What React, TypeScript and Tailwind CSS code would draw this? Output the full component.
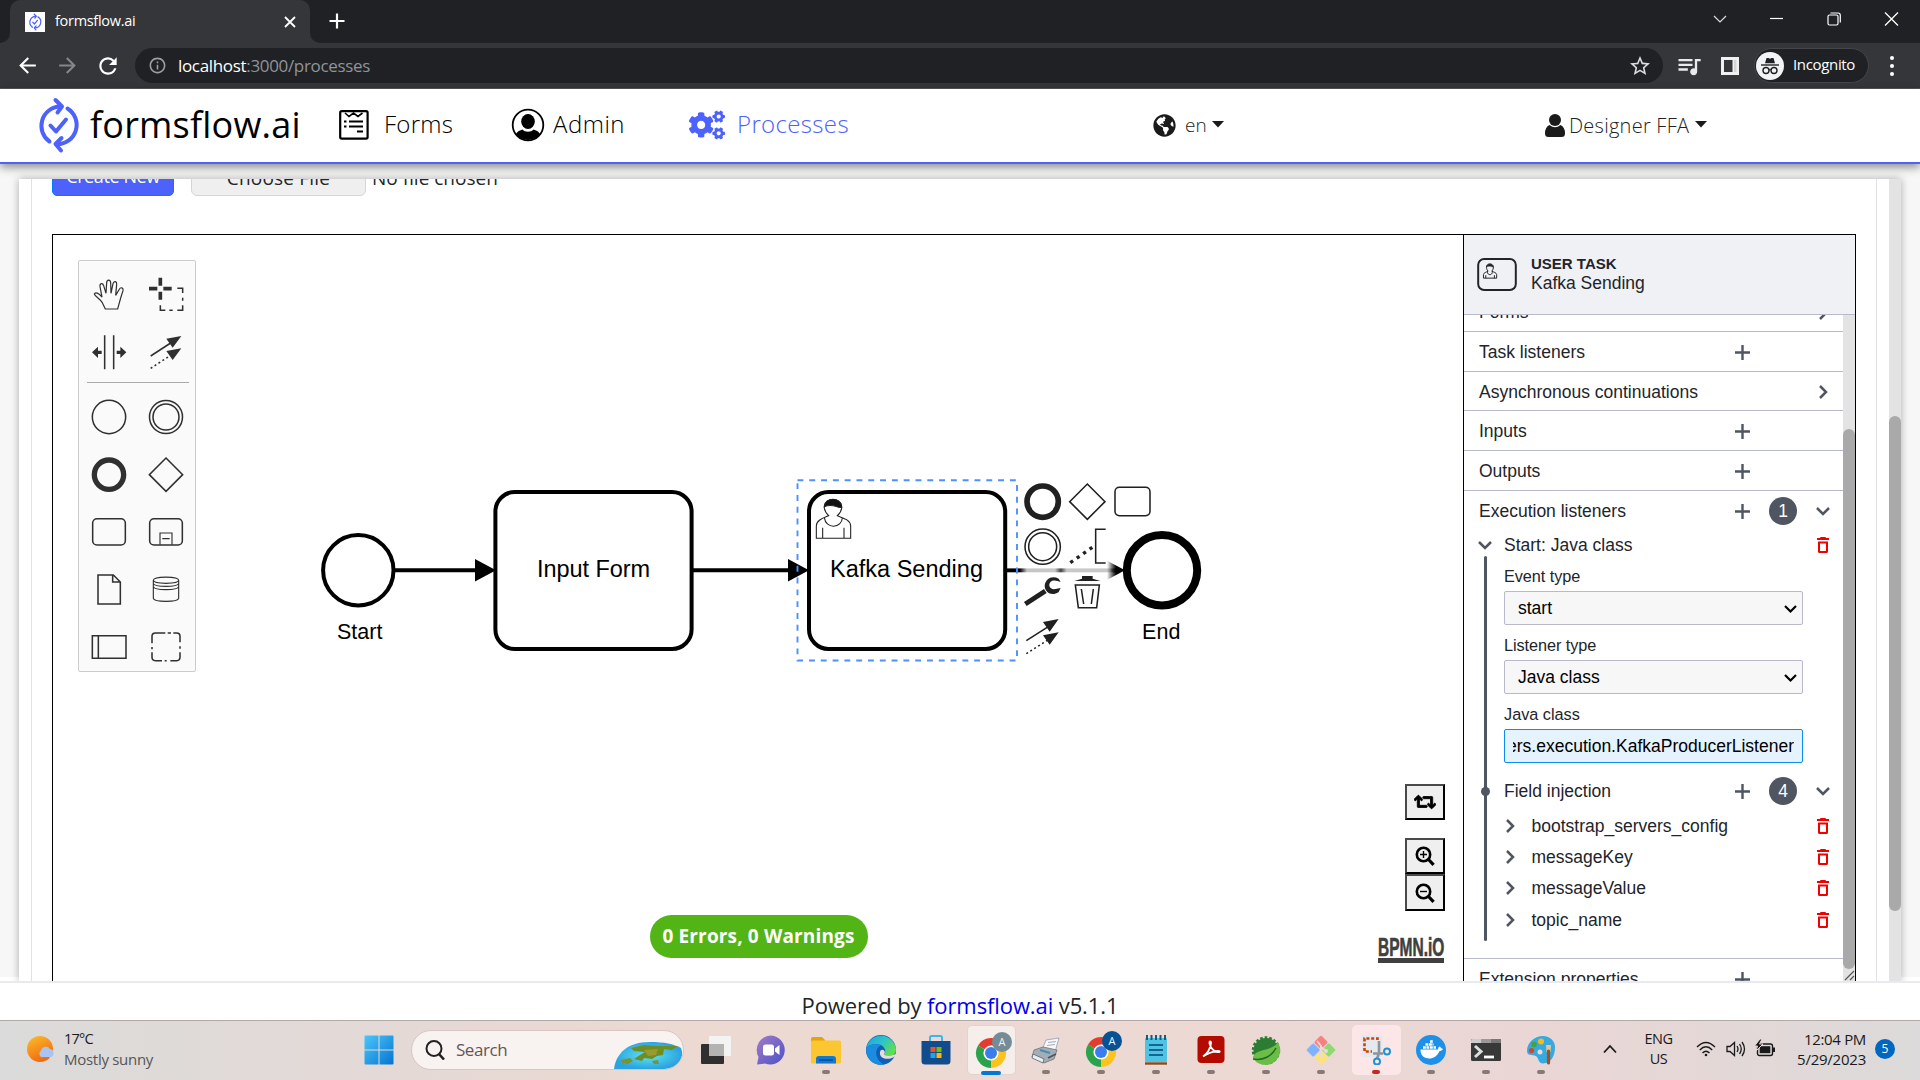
import React from "react";
import type { ReactNode } from "react";
import { FaCogs, FaGlobeAmericas, FaRetweet } from "react-icons/fa";
import { MdQueueMusic, MdStarBorder, MdInfoOutline, MdRefresh, MdArrowBack, MdArrowForward } from "react-icons/md";

const OPEN = "font-['Open_Sans','Noto_Sans',sans-serif]";
const ARIAL = "font-['Liberation_Sans',Arial,sans-serif]";

function LogoMark({ className }: { className: string }) {
  return (
    <svg viewBox="36 96 46 58" className={className} fill="none" stroke="#4d61fc" strokeWidth="4" strokeLinecap="round" strokeLinejoin="round">
      <path d="M50.5 141.5A19.3 19.3 0 0 1 61 106.5" />
      <path d="M56.5 100L63 106.5L58.5 112.5" />
      <path d="M68.5 108.5A19.3 19.3 0 0 1 58 144.2" />
      <path d="M62.5 138L56.5 144L62 150.5" />
      <path d="M51.5 125.5L57 131.5L67 119.5" />
    </svg>
  );
}

/* ---------- Browser chrome ---------- */

function TabStrip() {
  return (
    <div className="flex h-[43px] bg-[#202124] text-white">
      <div className="flex w-[10px] bg-[#35363a]">
        <div className="h-[43px] w-[10px] rounded-br-[10px] bg-[#202124]" />
      </div>
      <div className="flex w-[300px] items-center rounded-t-[10px] bg-[#35363a] pl-[15px] pr-[14px]">
        <div className="flex h-5 w-5 items-center justify-center bg-white">
          <LogoMark className="h-[18px] w-4" />
        </div>
        <span className="ml-[10px] -mt-[2px] text-[14.5px] tracking-[-0.3px]">formsflow.ai</span>
        <svg viewBox="0 0 12 12" className="ml-auto h-3 w-3" stroke="#fff" strokeWidth="1.8">
          <path d="M1 1L11 11M11 1L1 11" />
        </svg>
      </div>
      <div className="w-[10px] bg-[#35363a]">
        <div className="h-[43px] w-[10px] rounded-bl-[10px] bg-[#202124]" />
      </div>
      <svg viewBox="0 0 16 16" className="ml-[9px] mt-[13px] h-4 w-4" stroke="#fff" strokeWidth="2.2">
        <path d="M8 0.5V15.5M0.5 8H15.5" />
      </svg>
      <div className="ml-auto flex gap-[42px] pr-[21px] pt-[12px]">
        <svg viewBox="0 0 15 14" className="h-[14px] w-[15px]" fill="none" stroke="#ddd" strokeWidth="1.2">
          <path d="M1 4L7 10L13 4" />
        </svg>
        <svg viewBox="0 0 15 14" className="h-[14px] w-[15px]" stroke="#fff" strokeWidth="1.2">
          <path d="M0 6.5H13" />
        </svg>
        <svg viewBox="0 0 15 14" className="h-[14px] w-[15px]" fill="none" stroke="#fff" strokeWidth="1.2">
          <rect x="1" y="3" width="10" height="10" rx="1.5" />
          <path d="M3.5 1H11a2.3 2.3 0 0 1 2.3 2.3V10.5" />
        </svg>
        <svg viewBox="0 0 15 14" className="h-[14px] w-[15px]" stroke="#fff" strokeWidth="1.3">
          <path d="M1 0.5L14 13.5M14 0.5L1 13.5" />
        </svg>
      </div>
    </div>
  );
}

function AddressBar() {
  return (
    <div className="flex h-[46px] items-center border-b border-[#55565a] bg-[#35363a] pl-[15px] text-white">
      <MdArrowBack className="h-[25px] w-[25px]" />
      <MdArrowForward className="ml-[15px] h-[25px] w-[25px] text-[#85868a]" />
      <MdRefresh className="ml-[15px] h-[26px] w-[26px]" />
      <div className="ml-[14px] flex h-[35px] w-[1528px] items-center rounded-full bg-[#202124] pl-[13px] pr-[11px]">
        <MdInfoOutline className="h-[19px] w-[19px] text-[#9aa0a6]" />
        <span className="ml-[11px] text-[17px] tracking-[-0.33px]">
          localhost<span className="text-[#8f949a]">:3000/processes</span>
        </span>
        <MdStarBorder className="ml-auto h-[24px] w-[24px] text-[#dadce0]" />
      </div>
      <MdQueueMusic className="ml-[12px] h-[28px] w-[28px] text-[#e8eaed]" />
      <svg viewBox="0 0 18 18" className="ml-[18px] h-[18px] w-[18px]">
        <path fill="#f1f1f1" fillRule="evenodd" d="M0 0H18V18H0ZM3 3V15H11.5V3Z" />
        <rect x="13" y="3" width="2.4" height="12" fill="#d5d5d5" />
      </svg>
      <div className="ml-[15px] flex h-[35px] w-[115px] items-center rounded-full border border-[#45464a] bg-[#202124]">
        <svg viewBox="0 0 28 28" className="ml-px h-[28px] w-[28px]">
          <circle cx="14" cy="14" r="14" fill="#f1f3f4" />
          <path d="M10.5 6H12.5L14 6.8L15.5 6H17.5L19 11.3H9Z" fill="#202124" />
          <path d="M5 13H23" stroke="#202124" strokeWidth="1.4" />
          <g fill="none" stroke="#202124" strokeWidth="1.4">
            <circle cx="10" cy="18.5" r="3" />
            <circle cx="18" cy="18.5" r="3" />
            <path d="M13 18Q14 17.3 15 18" />
          </g>
        </svg>
        <span className="ml-[9px] -mt-[2px] text-[15px] tracking-[-0.34px]">Incognito</span>
      </div>
      <div className="ml-[21px] flex flex-col gap-[4px]">
        <i className="h-[4px] w-[4px] rounded-full bg-white" />
        <i className="h-[4px] w-[4px] rounded-full bg-white" />
        <i className="h-[4px] w-[4px] rounded-full bg-white" />
      </div>
    </div>
  );
}

/* ---------- Application header ---------- */

function Caret({ className }: { className: string }) {
  return (
    <svg viewBox="0 0 12 7" className={className}>
      <path d="M0 0H12L6 6.5Z" fill="#1a1a1a" />
    </svg>
  );
}

function AppHeader() {
  return (
    <header className="relative z-10 flex h-[75px] items-center border-b-2 border-[#4d61fc] bg-white pl-[35px] text-black shadow-[0_3px_9px_rgba(0,0,0,0.45)]">
      <LogoMark className="-mt-[2px] h-[58px] w-[46px]" />
      <span className="-mt-[2px] ml-[9px] w-[215px] whitespace-nowrap text-[36px] leading-[40px] tracking-[0.2px]">formsflow.ai</span>
      <svg viewBox="0 0 30 30" className="-mt-[2px] ml-[34px] h-[30px] w-[30px]" fill="none" stroke="#000">
        <rect x="1.2" y="1.2" width="27.4" height="27.4" rx="1.5" strokeWidth="2.2" />
        <path d="M6 3L10 6.5L14.5 3L19 6.5L23.5 3" strokeWidth="1.6" />
        <path d="M5 11.5H7.5M10 11.5H24M5 16.5H7.5M10 16.5H24M18 21.5H24" strokeWidth="2.1" />
      </svg>
      <span className="-mt-[3px] ml-[15px] w-[74px] text-[24px] font-light tracking-[0.3px]">Forms</span>
      <svg viewBox="0 0 34 34" className="-mt-px ml-[53px] h-[34px] w-[34px]">
        <clipPath id="adm"><circle cx="17" cy="17" r="15" /></clipPath>
        <circle cx="17" cy="17" r="15.3" fill="#fff" stroke="#000" strokeWidth="1.8" />
        <g clipPath="url(#adm)">
          <ellipse cx="17" cy="13.5" rx="6.8" ry="7.6" />
          <path d="M4 34V29C5 24 8 22.5 11.5 21.5C14 24.5 20 24.5 22.5 21.5C26 22.5 29 24 30 29V34Z" />
        </g>
      </svg>
      <span className="-mt-[3px] ml-[8px] w-[81px] text-[24px] font-light tracking-[0.5px]">Admin</span>
      <FaCogs className="-mt-[2px] ml-[55px] h-[36px] w-[36px] text-[#4d61fc]" />
      <span className="-mt-[3px] ml-[12px] w-[116px] text-[24px] font-light tracking-[0.35px] text-[#4d61fc]">Processes</span>
      <FaGlobeAmericas className="ml-[300px] h-[23px] w-[23px] text-[#1a1a1a]" />
      <span className="ml-[9px] w-[24px] text-[19px] font-light text-[#222]">en</span>
      <Caret className="-mt-[2px] ml-[3px] h-[7px] w-[12px]" />
      <svg viewBox="0 0 20 23" className="ml-[321px] h-[23px] w-[20px]">
        <ellipse cx="10" cy="6" rx="6" ry="6" fill="#1a1a1a" />
        <path d="M4.5 11Q10 15.5 15.5 11Q20 13 20 19.5Q20 23 16.5 23H3.5Q0 23 0 19.5Q0 13 4.5 11Z" fill="#1a1a1a" />
      </svg>
      <span className="ml-[4px] w-[122px] whitespace-nowrap text-[20px] font-light tracking-[0.25px] text-[#222]">Designer FFA</span>
      <Caret className="-mt-[2px] ml-[4px] h-[7px] w-[12px]" />
    </header>
  );
}

/* ---------- Modeler palette ---------- */

function Ico({ x, y, children }: { x: number; y: number; children: ReactNode }) {
  return (
    <div className="flex h-[57.6px] items-center justify-center">
      <svg viewBox={`${x - 72} ${y - 72} 144 144`} className="h-12 w-12" fill="none" stroke="#303030" strokeWidth="4.6">
        {children}
      </svg>
    </div>
  );
}

function Palette() {
  return (
    <div className="absolute left-[25px] top-[25px] h-[412px] w-[118px] rounded-[2px] border border-[#ccc] bg-[#fafafa]">
      <div className="mt-[5px] grid grid-cols-2 pl-px">
        <Ico x={205} y={225}>
          <path strokeWidth="3.6" d="M194 267L185 248C178 236 164 230 161 222C164 215 174 219 184 231L178 200C177 189 186 188 189 197L196 220L198 188C199 178 209 178 210 188L211 220L217 191C220 181 229 184 228 193L225 226L236 208C240 200 249 203 247 212L240 234L231 267Z" />
        </Ico>
        <Ico x={378} y={226}>
          <path strokeWidth="11" d="M361 174V198M361 216V240M327 207H352M370 207H395" />
          <path d="M412 206H428V220M428 234V243M428 257V272H412M398 272H388M376 272H361V257" />
        </Ico>
        <Ico x={205} y={397}>
          <path d="M192 347V449M219 347V449" />
          <path fill="#303030" stroke="none" d="M154 398L172 381V393H183V403H172V415ZM257 398L239 381V393H228V403H239V415Z" />
        </Ico>
        <Ico x={378} y={397}>
          <path d="M332 409L392 370" />
          <path d="M332 446L395 405" strokeDasharray="6 8" />
          <path fill="#303030" stroke="none" d="M424 349L379 357L398 384ZM424 386L379 394L398 421Z" />
        </Ico>
      </div>
      <div className="ml-[8px] mr-[6px] mb-[5px] mt-px h-px bg-[#aaa]" />
      <div className="grid grid-cols-2 pl-px">
        <Ico x={205} y={593}><circle cx="205" cy="593" r="50" /></Ico>
        <Ico x={378} y={593}>
          <circle cx="378" cy="593" r="49.500" />
          <circle cx="378" cy="593" r="39" />
        </Ico>
        <Ico x={205} y={765}><circle cx="205" cy="764" r="44" strokeWidth="16" /></Ico>
        <Ico x={378} y={765}><path d="M378 714L428 764L378 814L328 764Z" /></Ico>
        <Ico x={205} y={938}><rect x="156" y="898" width="98" height="79" rx="13" /></Ico>
        <Ico x={378} y={938}>
          <rect x="329" y="898" width="98" height="79" rx="13" />
          <path strokeWidth="3.4" d="M360 976V941H396V976M367 958H389" />
        </Ico>
        <Ico x={205} y={1111}><path d="M172 1066H218L239 1087V1153H172ZM216 1066V1087H239" /></Ico>
        <Ico x={378} y={1111}>
          <path strokeWidth="3.4" d="M340 1082C340 1069 416 1069 416 1082C416 1094 340 1094 340 1082V1136C342 1148 414 1148 416 1136V1082M340 1092C344 1103 412 1103 416 1092M340 1101C344 1113 412 1113 416 1101" />
        </Ico>
        <Ico x={205} y={1284}><path d="M155 1250H256V1318H155ZM173 1250V1318" /></Ico>
        <Ico x={378} y={1284}>
          <path d="M336 1273V1252Q336 1242 346 1242H376M383 1242H393M400 1242H410Q420 1242 420 1252V1270M420 1282V1289M420 1300V1315Q420 1325 410 1325H391M380 1325H374M366 1325H346Q336 1325 336 1315V1300M336 1284V1291" />
        </Ico>
      </div>
    </div>
  );
}

/* ---------- Diagram ---------- */

function Diagram() {
  return (
    <svg viewBox="53 235 1410 746" className="absolute left-0 top-0 h-[746px] w-[1410px]" fill="none" stroke="#000" strokeWidth="4">
      <defs>
        <linearGradient id="fade" gradientUnits="userSpaceOnUse" x1="1007" y1="0" x2="1124" y2="0">
          <stop offset="0.11" stopColor="#000" />
          <stop offset="0.17" stopColor="#c4c4c4" />
          <stop offset="0.41" stopColor="#c8c8c8" />
          <stop offset="0.46" stopColor="#444" />
          <stop offset="0.51" stopColor="#c8c8c8" />
          <stop offset="0.88" stopColor="#c8c8c8" />
          <stop offset="0.94" stopColor="#000" />
        </linearGradient>
        <linearGradient id="fadeHead" gradientUnits="userSpaceOnUse" x1="1107" y1="0" x2="1116" y2="0">
          <stop offset="0" stopColor="#000" stopOpacity="0" />
          <stop offset="1" stopColor="#000" />
        </linearGradient>
      </defs>
      <circle cx="358.3" cy="570.3" r="35.2" />
      <path d="M395 570.3H476M693 570.3H790" />
      <path fill="#000" stroke="none" d="M475 559L496 570.3L475 581.6ZM788 559L809 570.3L788 581.6Z" />
      <rect x="495.4" y="492" width="196.2" height="157" rx="19.5" />
      <rect x="809" y="492" width="196.2" height="157" rx="19.5" />
      <rect x="1007" y="568.4" width="110" height="3.9" fill="url(#fade)" stroke="none" />
      <path fill="url(#fadeHead)" stroke="none" d="M1104 559L1125 570.3L1104 581.6Z" />
      <circle cx="1162" cy="570.3" r="35.2" strokeWidth="8" />
      <rect x="797.5" y="480.3" width="219.5" height="180.2" stroke="#4d90ff" strokeWidth="1.9" strokeDasharray="5.9 5.9" />

      <g className={ARIAL} fill="#000" stroke="none">
        <text x="537" y="577" fontSize="23.5" textLength="113">Input Form</text>
        <text x="830" y="577" fontSize="23.5" textLength="153">Kafka Sending</text>
        <text x="337" y="639" fontSize="21.5" textLength="45.5">Start</text>
        <text x="1142" y="639" fontSize="21.5" textLength="38.5">End</text>
      </g>

      <g transform="translate(780 460) scale(0.33333)" stroke="#202020" strokeWidth="4.6">
        <g strokeWidth="3.2">
          <path d="M109 235V197C110 180 130 174 146 167C135 156 132 145 133 138C134 112 184 112 185 138C186 148 182 158 172 167C190 174 211 180 212 197V235ZM128 235V203M192 235V203M133 173C137 208 186 206 187 173" />
          <path fill="#111" d="M133 140C134 110 184 110 185 142C172 146 160 128 133 140Z" />
        </g>
        <circle cx="788" cy="125" r="47" strokeWidth="17" />
        <path d="M922 72L975 125L922 178L869 125Z" />
        <rect x="1005" y="82" width="105" height="85" rx="13" />
        <circle cx="788" cy="260" r="53" />
        <circle cx="788" cy="260" r="42" />
        <path d="M977 208H947V309H977" />
        <path d="M871 308L944 257" strokeWidth="10" strokeDasharray="10 13.5" />
        <path d="M736 432L796 393" strokeWidth="15" />
        <path stroke="none" fill="#202020" d="M836 356C818 346 796 354 794 378C795 398 816 410 836 396L842 384L822 388C808 386 804 374 812 365C820 358 832 362 842 366Z" />
        <path stroke="none" fill="#202020" d="M883 363L906 356V348H938V356L961 363Z" />
        <path d="M886 375H958L950 443H895ZM904 387L911 432M940 387L934 432" />
        <path d="M739 542L805 500" />
        <path d="M739 581L805 539" strokeDasharray="6 8" />
        <path fill="#202020" stroke="none" d="M836 477L789 486L809 515ZM836 517L789 526L809 554Z" />
      </g>
    </svg>
  );
}

function CanvasButton({ className, children }: { className: string; children: ReactNode }) {
  return (
    <div className={`flex w-[40px] items-center justify-center border-2 border-b-black border-l-[#4a4a4a] border-r-black border-t-[#4a4a4a] bg-[#efefef] text-black ${className}`}>
      {children}
    </div>
  );
}

function Magnifier({ plus }: { plus?: boolean }) {
  return (
    <svg viewBox="0 0 20 20" className="h-5 w-5" fill="none" stroke="#000">
      <circle cx="8.5" cy="8.5" r="6.7" strokeWidth="2.6" />
      <path d="M13.5 13.5L18.6 18.8" strokeWidth="3.2" />
      <path d={plus ? "M5 8.5H12M8.5 5V12" : "M5 8.5H12"} strokeWidth="1.4" />
    </svg>
  );
}

function ZoomControls() {
  return (
    <div className="absolute left-[1352px] top-[549px] flex flex-col">
      <CanvasButton className="h-[36px]"><FaRetweet className="h-[22px] w-[22px]" stroke="#000" strokeWidth="24" /></CanvasButton>
      <CanvasButton className="mt-[18px] h-[36px]"><Magnifier plus /></CanvasButton>
      <CanvasButton className="h-[37px]"><Magnifier /></CanvasButton>
    </div>
  );
}

/* ---------- Properties panel ---------- */

function Cell({ children }: { children?: ReactNode }) {
  return <div className="flex w-[40px] items-center justify-center">{children}</div>;
}

function Plus() {
  return (
    <svg viewBox="0 0 15 15" className="-ml-px h-[15px] w-[15px]" stroke="#505562" strokeWidth="2.4">
      <path d="M7.5 0V15M0 7.5H15" />
    </svg>
  );
}

function Chevron({ down }: { down?: boolean }) {
  return (
    <svg viewBox="0 0 14 14" className="h-[14px] w-[14px]" fill="none" stroke="#505562" strokeWidth="2.5">
      <path d={down ? "M1 4L7 10L13 4" : "M4 1L10 7L4 13"} />
    </svg>
  );
}

function Trash() {
  return (
    <svg viewBox="0 0 12 16" className="h-4 w-3">
      <path fill="#f10000" fillRule="evenodd" d="M3.5 0H8.5L9 1H12V3H0V1H3ZM1 4.500H11V14.500Q11 16 9.500 16H2.500Q1 16 1 14.500ZM3 6.500V14H9V6.500Z" />
    </svg>
  );
}

function Badge({ children }: { children: ReactNode }) {
  return <span className="flex h-7 w-7 items-center justify-center rounded-full bg-[#505562] text-[17.5px] text-white">{children}</span>;
}

function GroupRow({ label, height, plus, arrow }: { label: string; height: string; plus?: boolean; arrow?: boolean }) {
  return (
    <div className={`flex shrink-0 border-b border-[#b9bac9] pl-[15px] pt-[2px] ${height}`}>
      <span className="flex flex-1 items-center">{label}</span>
      <Cell>{plus && <Plus />}</Cell>
      <Cell />
      <Cell>{arrow && <Chevron />}</Cell>
    </div>
  );
}

function Select({ label, value }: { label: string; value: string }) {
  return (
    <div className="w-[299px] pt-[10px]">
      <div className="h-5 text-[16.25px] leading-5 tracking-[-0.06px]">{label}</div>
      <div className="mt-[5px] flex h-[34px] items-center justify-between rounded-[2px] border border-[#b9bac9] bg-[#f7f7f8] pl-[13px] pr-[5px] text-black">
        {value}
        <svg viewBox="0 0 13 13" className="h-[13px] w-[13px]" fill="none" stroke="#000" strokeWidth="2.2">
          <path d="M1 4L6.5 9.5L12 4" />
        </svg>
      </div>
    </div>
  );
}

const FIELDS = ["bootstrap_servers_config", "messageKey", "messageValue", "topic_name"];

function PropertiesPanel() {
  return (
    <aside className={`flex w-[392px] shrink-0 flex-col border-l border-black bg-white text-[17.5px] text-[#22242a] ${ARIAL}`}>
      <div className="flex h-[80px] shrink-0 items-center border-b border-[#b9bac9] bg-[#eff1f4] pl-[13px]">
        <svg viewBox="0 0 120 100" className="h-[33px] w-[40px]" fill="none" stroke="#22242a">
          <rect x="3" y="3" width="114" height="94" rx="18" strokeWidth="6" />
          <path strokeWidth="3" d="M19 61V50C20 44 28 43 33 40C28 34 28 30 28 27C29 15 48 15 49 27C49 32 48 36 44 40C50 43 58 44 59 50V61ZM26 61V52M52 61V52M31 43C32 53 45 53 46 43" />
          <path fill="#22242a" d="M28 27C29 15 48 15 49 27C43 28 39 22 28 27Z" />
        </svg>
        <div className="-mt-px ml-[14px]">
          <div className="text-[15px] font-bold leading-[18px]">USER TASK</div>
          <div className="leading-[20px]">Kafka Sending</div>
        </div>
      </div>
      <div className="flex min-h-0 flex-1">
        <div className="flex w-[379px] flex-col overflow-hidden">
          <GroupRow label="Forms" height="h-[40px] -mt-[23px]" arrow />
          <GroupRow label="Task listeners" height="h-[40px]" plus />
          <GroupRow label="Asynchronous continuations" height="h-[39px]" arrow />
          <GroupRow label="Inputs" height="h-[40px]" plus />
          <GroupRow label="Outputs" height="h-[40px]" plus />

          <div className="flex h-[40px] shrink-0 pl-[15px]">
            <span className="flex flex-1 items-center">Execution listeners</span>
            <Cell><Plus /></Cell>
            <Cell><Badge>1</Badge></Cell>
            <Cell><Chevron down /></Cell>
          </div>
          <div className="flex h-[25px] shrink-0 items-center pl-[14px] pt-[3px]">
            <Chevron down />
            <span className="ml-[12px] flex-1">Start: Java class</span>
            <Cell><Trash /></Cell>
          </div>
          <div className="flex h-[385px] shrink-0 pl-[20px]">
            <div className="relative w-[3px] rounded-full bg-[#505562]">
              <i className="absolute -left-[3px] top-[231px] h-[9px] w-[9px] rounded-full bg-[#505562]" />
            </div>
            <div className="ml-[17px] flex-1">
              <Select label="Event type" value="start" />
              <Select label="Listener type" value="Java class" />
              <div className="w-[299px] pt-[10px]">
                <div className="h-5 text-[16.25px] leading-5">Java class</div>
                <div className="mt-[5px] flex h-[34px] items-center rounded-[2px] border border-[#0a8cf0] bg-[#e5f3ff] px-[8px] pt-px text-black">
                  <div className="flex flex-1 justify-end overflow-hidden whitespace-nowrap">ers.execution.KafkaProducerListener</div>
                </div>
              </div>
              <div className="mt-[14px] flex h-[28px]">
                <span className="flex flex-1 items-center">Field injection</span>
                <Cell><Plus /></Cell>
                <Cell><Badge>4</Badge></Cell>
                <Cell><Chevron down /></Cell>
              </div>
              <div className="mt-[5px]">
                {FIELDS.map((f) => (
                  <div key={f} className="-ml-px flex h-[31.4px] items-center">
                    <Chevron />
                    <span className="ml-[14.500px] flex-1">{f}</span>
                    <Cell><Trash /></Cell>
                  </div>
                ))}
              </div>
            </div>
          </div>
          <div className="mt-[17px] flex h-[42px] shrink-0 border-t border-[#b9bac9] pl-[15px]">
            <span className="flex flex-1 items-center">Extension properties</span>
            <Cell><Plus /></Cell>
            <Cell />
            <Cell />
          </div>
        </div>
        <div className="flex w-[12px] flex-col bg-[#e3e3e3]">
          <div className="mt-[114px] h-[540px] rounded-full bg-[#a9a9a9]" />
          <svg viewBox="0 0 12 12" className="h-3 w-3" stroke="#555" strokeWidth="1.2">
            <path d="M2 11L11 2M7 11L11 7" />
          </svg>
        </div>
      </div>
    </aside>
  );
}

/* ---------- Page body ---------- */

function Workspace() {
  return (
    <main className="flex h-[817px] bg-[linear-gradient(#f7f7f7_813px,#fff_813px)] pl-[19px] pt-[15px]">
      <div className="flex h-[802px] w-[1882px] overflow-hidden bg-white shadow-[0_0_8px_rgba(0,0,0,0.3)]">
        <div className="ml-[12px] w-[1846px] border-x border-[#dee2e6] pl-[20px]">
          <div className="-mt-[29px] flex h-[46px] text-[#212529]">
            <div className="flex w-[122px] items-end justify-center rounded-[5px] border border-[#007bff] bg-[#4d61fc] pb-[5px] text-[18px] tracking-[-0.4px] text-white">
              Create New
            </div>
            <div className="ml-[17px] flex w-[175px] items-end justify-center rounded-[6px] border border-[#d5d5d5] bg-[#efefef] pb-[3px] text-[19px] tracking-[0.2px]">
              Choose File
            </div>
            <div className="ml-[6px] flex items-end pb-[4px] text-[19px]">No file chosen</div>
          </div>
          <div className="mt-[38px] flex h-[760px] w-[1804px] border border-black">
            <div className="relative h-full w-[1410px] shrink-0">
              <Diagram />
              <Palette />
              <ZoomControls />
              <div className="absolute left-[1325px] top-[699px] w-[66px] border-b-[5px] border-[#404040] pb-px">
                <div className={`h-[23px] w-[66px] origin-left scale-x-[0.585] whitespace-nowrap text-[26.5px] font-bold leading-[26px] text-[#404040] [-webkit-text-stroke:0.6px_#404040] ${ARIAL}`}>BPMN.iO</div>
              </div>
              <div className="absolute left-[596.500px] top-[680px] flex h-[43px] w-[218px] items-center justify-center rounded-full bg-[#52b415] text-[19px] font-bold tracking-[0.15px] text-white">
                0 Errors, 0 Warnings
              </div>
            </div>
            <div className="flex h-[746px]">
              <PropertiesPanel />
            </div>
          </div>
        </div>
        <div className="ml-[12px] w-[12px] bg-[#e3e3e3] pt-[237px]">
          <div className="h-[495px] rounded-full bg-[#a9a9a9]" />
        </div>
      </div>
    </main>
  );
}

/* ---------- Taskbar ---------- */

function Chrome({ badge }: { badge: string }) {
  return (
    <svg viewBox="0 0 36 36" className="ml-[3px] h-9 w-9 overflow-visible">
      <g transform="translate(16 20)">
        <path d="M0 0L-13 -7.5A15 15 0 0 1 13 -7.5Z" fill="#e33b2e" />
        <path d="M0 0L-13 -7.5A15 15 0 0 0 0 15Z" fill="#2ba24c" />
        <path d="M0 0L0 15A15 15 0 0 0 13 -7.5H0Z" fill="#fcc31e" />
        <circle r="7.6" fill="#fff" />
        <circle r="6" fill="#3b7ded" />
      </g>
      <circle cx="27" cy="9" r="10" fill={badge} />
      <text x="27" y="13" fontSize="11" textAnchor="middle" fill="#eef3f6">A</text>
    </svg>
  );
}

type App = { icon: ReactNode; mark?: "run" | "active" | "alert" };

const S = "h-[30px] w-[30px]";

const APPS: App[] = [
  { icon: <svg viewBox="0 0 30 30" className={S}><rect x="0" y="9" width="23" height="20" rx="1" fill="#2f2f2f" /><rect x="8" y="1" width="22" height="20" rx="1" fill="#f3f3f3" /><rect x="8" y="9" width="15" height="12" fill="#b5b3b2" /></svg> },
  { icon: <svg viewBox="0 0 30 30" className={S}><defs><linearGradient id="tm" x2="1" y2="1"><stop stopColor="#a37bc9" /><stop offset="1" stopColor="#4a52c8" /></linearGradient></defs><path d="M15 0.5A14.5 14.5 0 1 1 9 28.5L1 29.5L2.5 22A14.5 14.5 0 0 1 15 0.5Z" fill="url(#tm)" /><rect x="7" y="9.5" width="11" height="11" rx="2.5" fill="#fff" /><path d="M19 13.5L23.5 10V20L19 16.5Z" fill="#fff" /></svg> },
  { mark: "run", icon: <svg viewBox="0 0 30 30" className={S}><path d="M0 4Q0 2 2 2H11L14 5V10H0Z" fill="#e2a30c" /><rect x="0" y="5.5" width="30" height="23" rx="1.5" fill="#fbc62f" /><path d="M5 28.5V24Q5 21 8 21H22Q25 21 25 24V28.5Z" fill="#1379cf" /><path d="M8 25H22" stroke="#0a4f94" strokeWidth="1.6" /></svg> },
  { icon: <svg viewBox="0 0 30 30" className={S}><defs><linearGradient id="eg" x2="1" y2="0.6"><stop stopColor="#1aa5e0" /><stop offset="0.55" stopColor="#30c4c8" /><stop offset="1" stopColor="#5fe04a" /></linearGradient></defs><circle cx="15" cy="15" r="15" fill="#0f5fb8" /><path d="M0.3 13A15 15 0 0 1 30 14.5C30 19 26.5 21 23 21C19 21 17.5 19.5 19 17.5C20 15 18 10.5 13 9.5C7 8.5 2 10 0.3 13Z" fill="url(#eg)" /><path d="M0.3 13C4 8.5 11 8.5 14.5 10.5C10.5 12.5 9 17 11 22C12.5 26 16 29 19 29.4A15 15 0 0 1 0.3 13Z" fill="#1a8de0" /><path d="M14 17C13 23 20 26 28.5 22L30 19L23.5 20.9C19 21.2 17.5 19.5 18.8 17.8C19 14 14.5 14 14 17Z" fill="#ecd9d4" /></svg> },
  { icon: <svg viewBox="0 0 30 30" className={S}><path d="M9 8V2.5Q9 1 10.5 1H19.5Q21 1 21 2.5V8" fill="none" stroke="#39b7ee" strokeWidth="2" /><path d="M0.5 6H29.5V26Q29.5 29.5 26 29.5H4Q0.5 29.5 0.5 26Z" fill="#134c8c" /><rect x="9.5" y="12" width="5" height="5" fill="#f25022" /><rect x="15.5" y="12" width="5" height="5" fill="#7fba00" /><rect x="9.5" y="18" width="5" height="5" fill="#19a5ef" /><rect x="15.5" y="18" width="5" height="5" fill="#ffb900" /></svg> },
  { mark: "active", icon: <Chrome badge="#748c98" /> },
  { mark: "run", icon: <svg viewBox="0 0 30 30" className={S}><path d="M15 5L28 3L24 17L11 15Z" fill="#f5f7f8" stroke="#99a" strokeWidth="0.8" /><path d="M3 15L12 12L26 15L23 24L13 28L1 22Z" fill="#a4adb3" stroke="#6a7378" strokeWidth="0.8" /><path d="M9 15L19 18" stroke="#4a8ab8" strokeWidth="2" /><path d="M2 19L13 24L12 28L1 23Z" fill="#e9edef" stroke="#59636a" strokeWidth="0.8" /><path d="M17 23L25 19" stroke="#4a545b" strokeWidth="1.6" /><path d="M17 7.5L25 6.5M16 10.5L24 9.5" stroke="#aab" /></svg> },
  { mark: "run", icon: <Chrome badge="#075294" /> },
  { mark: "run", icon: <svg viewBox="0 0 30 30" className={S}><rect x="4" y="3" width="22" height="24" rx="1" fill="#4ec3e3" /><path d="M6 0V5M10.5 0V5M15 0V5M19.5 0V5M24 0V5" stroke="#155a83" strokeWidth="2" /><path d="M8 10H22M8 15H22M8 20H22" stroke="#14658f" strokeWidth="1.8" /><path d="M4 28.5H26" stroke="#8a4b1c" strokeWidth="2.4" /></svg> },
  { mark: "run", icon: <svg viewBox="0 0 30 30" className={S}><rect x="1.5" y="1" width="27" height="27" rx="4" fill="#b30b00" /><path d="M7 21.5C11 19 15 13 15 8C15 5.5 13 6 13.5 8.5C14.5 14 20 18 23.5 17C25 15.5 18 14.5 7 21.5Z" fill="none" stroke="#fff" strokeWidth="1.8" /></svg> },
  { mark: "run", icon: <svg viewBox="0 0 30 30" className={S}><circle cx="15" cy="15.5" r="12.5" fill="#2c7d33" stroke="#2c7d33" strokeWidth="3.5" strokeDasharray="2.6 1.8" /><path d="M27 7C32 16 28 29 15 30C9 30 4 27 2 23C3 13 21 17 27 7Z" fill="#6cbd45" /><path d="M2 24C12 26 21 21 25 13" fill="none" stroke="#1f6a2b" strokeWidth="1.5" /></svg> },
  { mark: "run", icon: <svg viewBox="0 0 30 30" className={S}><g transform="rotate(45 15 15)"><rect x="4.5" y="4.5" width="10" height="10" rx="1.5" fill="#f98080" /><rect x="15.5" y="4.5" width="10" height="10" rx="1.5" fill="#8bdb72" /><rect x="4.5" y="15.5" width="10" height="10" rx="1.5" fill="#80b3ff" /><rect x="15.5" y="15.5" width="10" height="10" rx="1.5" fill="#fde278" /></g><path d="M11 6L15 11V22M15 12L20 16" stroke="#ecd9d4" strokeWidth="2" fill="none" /><circle cx="15" cy="21" r="2" fill="#ecd9d4" /><circle cx="20" cy="16" r="2" fill="#ecd9d4" /></svg> },
  { mark: "alert", icon: <svg viewBox="0 0 30 30" className={S}><rect x="0.5" y="0" width="21" height="22" rx="2" fill="#e4e9ee" /><path d="M16.5 5V3.5H3.5V16.5H11" fill="none" stroke="#d4400d" strokeWidth="2.6" strokeDasharray="3 1.800" /><path d="M18 6V18L16 24M12 18.5H22" stroke="#8b959c" strokeWidth="2.6" fill="none" /><g fill="none" stroke="#1a94d6" strokeWidth="2"><circle cx="26" cy="16.5" r="3" /><circle cx="16" cy="26.5" r="3" /></g></svg> },
  { mark: "run", icon: <svg viewBox="0 0 30 30" className={S}><circle cx="15" cy="15" r="15" fill="#1d91ea" /><path d="M4.5 14.5H22C22 12.5 23 11.5 24 11.5C25 13 25.5 13.5 27 14C26 15.5 24.5 16 23.5 16C21.5 21 17.5 23.5 13 23.5C7.5 23.5 4.5 20 4.5 14.5Z" fill="#fff" /><path d="M7 12.5H20M9.5 9.500H17.500M14 6.500H17.500" stroke="#fff" strokeWidth="2.4" strokeDasharray="2.8 0.7" /></svg> },
  { mark: "run", icon: <svg viewBox="0 0 30 30" className={S}><rect x="0" y="4" width="30" height="22" rx="1.5" fill="#383838" /><path d="M0 8V5.5Q0 4 1.5 4H10V8Z" fill="#ccc" /><rect x="10" y="4" width="10" height="4" fill="#9a9a9a" /><rect x="20" y="4" width="10" height="4" fill="#777" /><path d="M4 11L10 16.5L4 22" fill="none" stroke="#ddd" strokeWidth="3" /><path d="M13 22H23" stroke="#fff" strokeWidth="2.8" /></svg> },
  { mark: "run", icon: <svg viewBox="0 0 30 30" className={S}><path d="M17 1C24 1 29 6 29 12C29 20 26 28 17 28.5C12 28.5 13 23 10 21C6 19.5 1 21 1 16C1 8 8 1 17 1Z" fill="#35a9e1" /><circle cx="15" cy="6.5" r="3" fill="#fcb815" /><circle cx="8" cy="9.5" r="2.8" fill="#46a33b" /><circle cx="5.5" cy="15.5" r="2.6" fill="#d1472c" /><circle cx="14" cy="17" r="2.5" fill="#ecd9d4" /><path d="M20 10H25L24.5 17H20.5Z" fill="#e8c58d" /><path d="M22.5 16V28" stroke="#a0521f" strokeWidth="3.2" strokeLinecap="round" /></svg> },
];

function TaskbarApp({ icon, mark }: App) {
  const tile =
    mark === "active"
      ? "bg-[#f6eeeb] border border-[#e3d3ce]"
      : mark === "alert"
        ? "bg-[#fce6e8]"
        : "";
  return (
    <div className="flex w-[55px] justify-center">
      <div className={`mt-[4px] flex h-[50px] w-[49px] flex-col items-center rounded-[5px] ${tile}`}>
        <div className="flex h-[45px] shrink-0 items-center pt-[4px]">{icon}</div>
        {mark === "active" && <i className="h-[4px] w-[20px] shrink-0 rounded-full bg-[#0078d4]" />}
        {mark === "alert" && <i className="h-[4px] w-[8px] shrink-0 rounded-full bg-[#c42b1c]" />}
        {mark === "run" && <i className="h-[4px] w-[8px] shrink-0 rounded-full bg-[#857a78]" />}
      </div>
    </div>
  );
}

function Taskbar() {
  return (
    <div className="flex h-[60px] border-t border-[#b0a9a8] bg-[linear-gradient(90deg,#dadbda_0%,#e4d9d6_20%,#ecd9d2_36%,#ecd9d4_65%,#ead6d4_80%,#dcdada_100%)] text-[15px] text-[#1a1a1a]">
      <div className="flex w-[365px] items-center pl-[27px]">
        <svg viewBox="0 0 30 28" className="-mt-[3px] h-[28px] w-[30px]">
          <defs><linearGradient id="sun" x2="0.5" y2="1"><stop stopColor="#fbbf2c" /><stop offset="1" stopColor="#f26a10" /></linearGradient></defs>
          <circle cx="13" cy="14" r="13" fill="url(#sun)" />
          <path d="M14 22A4 4 0 0 1 14 15.500A5 5 0 0 1 23 14A4.200 4.200 0 0 1 24 22Z" fill="#a9c3f2" />
        </svg>
        <div className="-mt-[4px] ml-[7px] leading-[20px]">
          <div className="text-[14.5px] tracking-[-0.8px]">17°C</div>
          <div className="tracking-[-0.28px] text-[#555]">Mostly sunny</div>
        </div>
      </div>
      <svg viewBox="0 0 30 30" className="-ml-px mt-[14px] h-[30px] w-[30px]">
        <defs><linearGradient id="win" gradientUnits="userSpaceOnUse" x2="30" y2="30"><stop stopColor="#4cc8fb" /><stop offset="1" stopColor="#0473d1" /></linearGradient></defs>
        <path fill="url(#win)" d="M0.5 1.5Q0.5 0.5 1.5 0.5H14.5V14.5H0.5ZM15.5 0.5H28.5Q29.5 0.5 29.5 1.5V14.5H15.5ZM0.5 15.5H14.5V29.5H1.5Q0.5 29.5 0.5 28.5ZM15.5 15.5H29.5V28.5Q29.5 29.5 28.5 29.5H15.5Z" />
      </svg>
      <div className="ml-[17px] mt-[9px] flex h-[40px] w-[273px] items-center overflow-hidden rounded-full border border-[#d9c5c2] bg-[#f8f2f0] pl-[13px]">
        <svg viewBox="0 0 20 20" className="h-5 w-5" fill="none" stroke="#222" strokeWidth="2">
          <circle cx="9" cy="8.5" r="7.5" />
          <path d="M14 14L19 19.5" strokeWidth="2.600" />
        </svg>
        <span className="ml-[11px] text-[17px] tracking-[-0.45px] text-[#5d5957]">Search</span>
        <svg viewBox="0 0 69 28" className="ml-auto mt-[10px] h-[28px] w-[69px]">
          <defs><radialGradient id="sea"><stop stopColor="#5fe6f2" /><stop offset="1" stopColor="#2ba3e0" /></radialGradient></defs>
          <path d="M0 28C2 12 14 1 36 1C50 1 60 3 67 7C71 16 64 28 52 28Z" fill="url(#sea)" />
          <path d="M17 7L30 4L46 5L64 5L58 9L50 8L49 14L43 15L38 18L30 17L28 20L20 18L26 14L31 11L20 10Z" fill="#6f8d23" />
          <path d="M30 9L44 8L42 14L34 15Z" fill="#9a9a2e" />
          <path d="M7 19L16 17L19 20L14 23L8 22ZM38 20L44 19L45 23L40 23Z" fill="#7b952b" />
        </svg>
      </div>
      <div className="ml-[4.5px] flex">
        {APPS.map((a, i) => (
          <TaskbarApp key={i} {...a} />
        ))}
      </div>
      <div className="ml-auto flex items-center pb-[3px]">
        <svg viewBox="0 0 14 10" className="h-[10px] w-[14px]" fill="none" stroke="#1a1a1a" strokeWidth="1.8">
          <path d="M1 8.5L7 2L13 8.5" />
        </svg>
        <div className="ml-[27px] w-[29px] text-center text-[14.5px] leading-[20px] tracking-[-0.5px]">
          <div>ENG</div>
          <div>US</div>
        </div>
        <svg viewBox="0 0 20 16" className="ml-[23px] h-4 w-5" fill="none" stroke="#1a1a1a" strokeWidth="1.4">
          <path d="M1 6Q10 -3 19 6M3.8 9Q10 2.5 16.2 9M6.5 12Q10 8.5 13.5 12" />
          <circle cx="10" cy="14" r="1.3" fill="#1a1a1a" stroke="none" />
        </svg>
        <svg viewBox="0 0 20 16" className="ml-[10px] h-4 w-5" fill="none" stroke="#1a1a1a" strokeWidth="1.3">
          <path d="M1 5.5H4L8.5 1.5V14.5L4 10.5H1ZM11 5Q13 8 11 11M13.5 3Q17 8 13.5 13M16 1Q21 8 16 15" />
        </svg>
        <svg viewBox="0 0 20 16" className="ml-[10px] h-4 w-5 overflow-visible" fill="none" stroke="#1a1a1a">
          <rect x="1.5" y="3" width="15" height="11.5" rx="2" strokeWidth="1.4" />
          <rect x="3.7" y="5.2" width="10.6" height="7" fill="#1a1a1a" stroke="none" />
          <path d="M18 6.5V11" strokeWidth="2" />
          <path d="M4 -2L-1.5 5H1.5L0 10L7 3H3.5L6 -2Z" fill="#1a1a1a" stroke="#ead8d6" strokeWidth="1" />
        </svg>
        <div className="ml-[20px] w-[70px] text-right">
          <div className="h-[20px] whitespace-nowrap leading-[20px] tracking-[-0.33px]">12:04 PM</div>
          <div className="h-[20px] whitespace-nowrap leading-[20px] tracking-[-0.23px]">5/29/2023</div>
        </div>
        <span className="ml-[9px] mr-[25px] flex h-5 w-5 items-center justify-center rounded-full bg-[#0067c0] text-[12px] text-white">5</span>
      </div>
    </div>
  );
}

export default function App() {
  return (
    <div className={`flex h-[1080px] w-[1920px] flex-col overflow-hidden bg-white ${OPEN}`}>
      <TabStrip />
      <AddressBar />
      <AppHeader />
      <Workspace />
      <footer className="flex h-[39px] items-center justify-center border-t-2 border-[#e8e9f1] bg-white pt-[6px] text-[22px] leading-[28px] tracking-[-0.1px] text-[#212529]">
        <span>
          Powered by <span className="text-[#0000ee]">formsflow.ai</span> v5.1.1
        </span>
      </footer>
      <Taskbar />
    </div>
  );
}
